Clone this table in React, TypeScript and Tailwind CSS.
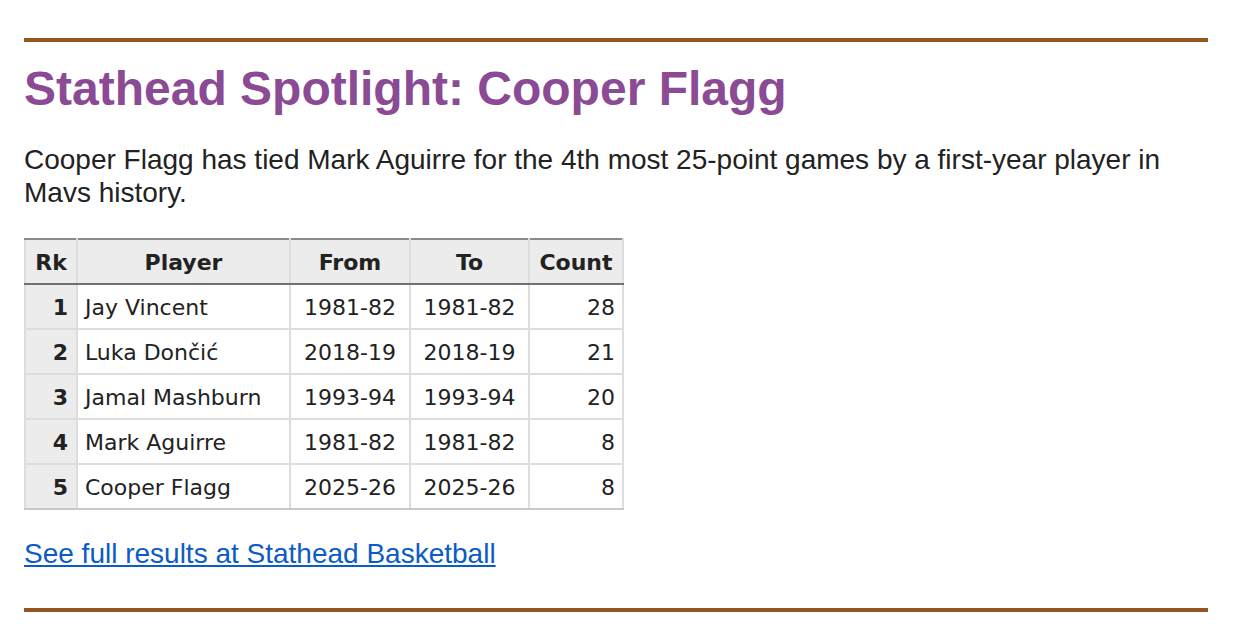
import React from "react";

const rows = [
  { rk: 1, player: "Jay Vincent", from: "1981-82", to: "1981-82", count: 28 },
  { rk: 2, player: "Luka Dončić", from: "2018-19", to: "2018-19", count: 21 },
  { rk: 3, player: "Jamal Mashburn", from: "1993-94", to: "1993-94", count: 20 },
  { rk: 4, player: "Mark Aguirre", from: "1981-82", to: "1981-82", count: 8 },
  { rk: 5, player: "Cooper Flagg", from: "2025-26", to: "2025-26", count: 8 },
];

const headCls =
  "border-x-2 border-x-[#ddd] border-t-2 border-t-[#8a8a8a] border-b-2 border-b-[#707070] font-bold text-center pt-[2px]";

export default function App() {
  return (
    <div className="min-h-[638px] bg-white px-[24px] pt-[38px] pb-[26px] w-[1232px]">
      <div className="h-[4px] bg-[#935620]" />
      <h2
        className="mt-[19px] text-[48px] leading-[56px] font-bold text-[#8b4a94]"
        style={{ fontFamily: '"Liberation Sans", Arial, sans-serif' }}
      >
        Stathead Spotlight: Cooper Flagg
      </h2>
      <p
        className="mt-[26px] text-[28px] leading-[33px] text-[#222]"
        style={{ fontFamily: '"Liberation Sans", Arial, sans-serif' }}
      >
        Cooper Flagg has tied Mark Aguirre for the 4th most 25-point games by a first-year player in Mavs history.
      </p>
      <table
        className="mt-[29px] border-collapse text-[22px] text-[#222]"
        style={{ fontFamily: '"DejaVu Sans", Verdana, sans-serif' }}
      >
        <thead>
          <tr className="h-[45px] bg-[#ececec]">
            <th className={`w-[52px] ${headCls}`}>Rk</th>
            <th className={`w-[213px] ${headCls}`}>Player</th>
            <th className={`w-[120px] ${headCls}`}>From</th>
            <th className={`w-[119px] ${headCls}`}>To</th>
            <th className={`w-[94px] ${headCls}`}>Count</th>
          </tr>
        </thead>
        <tbody>
          {rows.map((r, i) => {
            const last = i === rows.length - 1;
            const b = last
              ? "border-x-2 border-x-[#ddd] border-t-2 border-t-[#ddd] border-b-2 border-b-[#c8c8c8] border-b-dotted pt-[2px]"
              : "border-2 border-[#ddd] pt-[2px]";
            return (
              <tr key={r.rk} className="h-[45px]">
                <th className={`${b} bg-[#ececec] font-bold text-right pr-[8px]`}>{r.rk}</th>
                <td className={`${b} text-left pl-[7px] font-normal`}>{r.player}</td>
                <td className={`${b} text-center`}>{r.from}</td>
                <td className={`${b} text-center`}>{r.to}</td>
                <td className={`${b} text-right pr-[7px]`}>{r.count}</td>
              </tr>
            );
          })}
        </tbody>
      </table>
      <div className="mt-[27px] h-[33px] leading-[33px]">
        <a
          href="#"
          className="text-[28px] text-[#0b5bc8] underline"
          style={{ fontFamily: '"Liberation Sans", Arial, sans-serif' }}
        >
          See full results at Stathead Basketball
        </a>
      </div>
      <div className="mt-[38px] h-[4px] bg-[#935620]" />
    </div>
  );
}
